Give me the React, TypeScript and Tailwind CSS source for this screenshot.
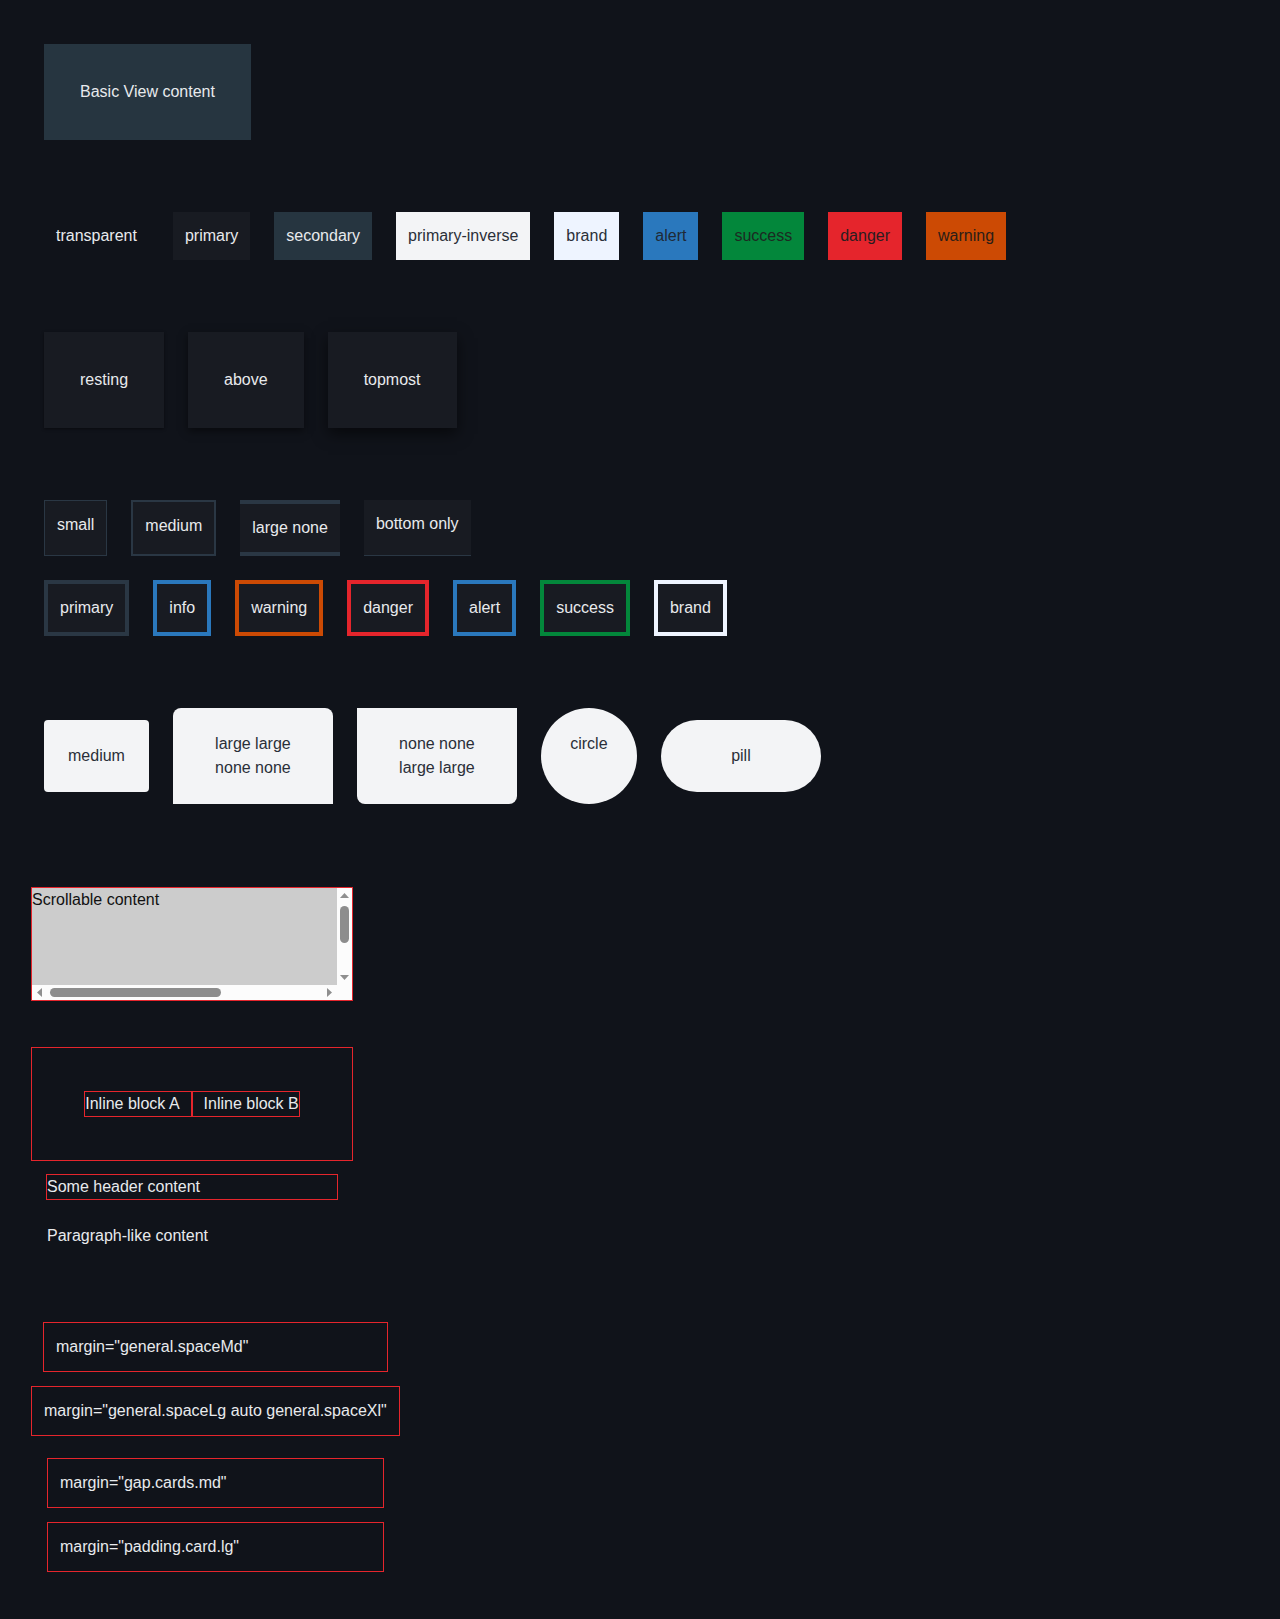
import React from "react";

const bgSwatches = [
  { label: "transparent", cls: "bg-transparent text-[#e8eaed]" },
  { label: "primary", cls: "bg-[#181b22] text-[#e8eaed]" },
  { label: "secondary", cls: "bg-[#263540] text-[#e8eaed]" },
  { label: "primary-inverse", cls: "bg-[#f3f4f6] text-[#2a2f38]" },
  { label: "brand", cls: "bg-[#eef4ff] text-[#2a2f38]" },
  { label: "alert", cls: "bg-[#2a78bd] text-[#1f2a36]" },
  { label: "success", cls: "bg-[#03873b] text-[#1c2a22]" },
  { label: "danger", cls: "bg-[#e5252c] text-[#2a1d20]" },
  { label: "warning", cls: "bg-[#cc4a04] text-[#2a1e18]" },
];

const elevations = [
  { label: "resting", cls: "shadow-[0_1px_3px_rgba(0,0,0,0.45)]" },
  { label: "above", cls: "shadow-[0_3px_8px_rgba(0,0,0,0.5)]" },
  { label: "topmost", cls: "shadow-[0_6px_14px_rgba(0,0,0,0.55)]" },
];

const borderColors = [
  { label: "primary", cls: "border-[#2a3744]" },
  { label: "info", cls: "border-[#2a78bd]" },
  { label: "warning", cls: "border-[#cc4a04]" },
  { label: "danger", cls: "border-[#e5252c]" },
  { label: "alert", cls: "border-[#2a78bd]" },
  { label: "success", cls: "border-[#03873b]" },
  { label: "brand", cls: "border-[#eef4ff]" },
];

// little triangle used on the scrollbar buttons
const Arrow = ({ dir }: { dir: "up" | "down" | "left" | "right" }) => {
  const pts = {
    up: "0,5 4.5,0 9,5",
    down: "0,0 9,0 4.5,5",
    left: "5,0 5,9 0,4.5",
    right: "0,0 5,4.5 0,9",
  }[dir];
  const vertical = dir === "up" || dir === "down";
  return (
    <div className="flex h-[15px] w-[15px] shrink-0 items-center justify-center">
      <svg width={vertical ? 9 : 5} height={vertical ? 5 : 9}>
        <polygon points={pts} fill="#8f8f8f" />
      </svg>
    </div>
  );
};

const App = () => {
  return (
    <div className="min-h-screen bg-[#10131a] font-['Liberation_Sans',Arial,sans-serif] text-base leading-6 text-[#e8eaed] flex flex-col items-start pb-12">
      {/* basic view */}
      <div className="ml-[44px] mt-[44px] bg-[#263540] p-9">Basic View content</div>

      {/* backgrounds */}
      <div className="ml-[44px] mt-[72px] flex gap-6">
        {bgSwatches.map((s) => (
          <div key={s.label} className={`p-3 ${s.cls}`}>
            {s.label}
          </div>
        ))}
      </div>

      {/* elevation */}
      <div className="ml-[44px] mt-[72px] flex gap-6">
        {elevations.map((e) => (
          <div key={e.label} className={`bg-[#181b22] p-9 ${e.cls}`}>
            {e.label}
          </div>
        ))}
      </div>

      {/* border widths */}
      <div className="ml-[44px] mt-[72px] flex items-stretch gap-6">
        <div className="border border-[#2a3744] bg-[#181b22] px-3 pt-3">small</div>
        <div className="border-2 border-[#2a3744] bg-[#181b22] px-3 pt-3">medium</div>
        <div className="border-y-4 border-[#2a3744] bg-[#181b22] p-3">large none</div>
        <div className="border-b border-[#2a3744] bg-[#181b22] px-3 pt-3">bottom only</div>
      </div>

      {/* border colours */}
      <div className="ml-[44px] mt-6 flex gap-6">
        {borderColors.map((b) => (
          <div key={b.label} className={`border-4 bg-[#181b22] p-3 ${b.cls}`}>
            {b.label}
          </div>
        ))}
      </div>

      {/* radius */}
      <div className="ml-[44px] mt-[72px] flex items-center gap-6 text-[#2a2f38]">
        <div className="rounded bg-[#f3f4f6] p-6">medium</div>
        <div className="w-[160px] rounded-t-lg bg-[#f3f4f6] p-6 text-center">
          large large
          <br />
          none none
        </div>
        <div className="w-[160px] rounded-b-lg bg-[#f3f4f6] p-6 text-center">
          none none
          <br />
          large large
        </div>
        <div className="h-24 w-24 rounded-full bg-[#f3f4f6] pt-6 text-center">circle</div>
        <div className="w-[160px] rounded-full bg-[#f3f4f6] p-6 text-center">pill</div>
      </div>

      {/* scroll container with classic scrollbars */}
      <div className="ml-[31px] mt-[83px] flex h-[114px] w-[322px] flex-col border border-[#e5252c] bg-[#fcfcfc]">
        <div className="flex h-[97px]">
          <div className="w-[305px] overflow-hidden bg-[#cccccc] text-[#111111]">Scrollable content</div>
          <div className="flex w-[15px] flex-col items-center">
            <Arrow dir="up" />
            <div className="mt-[3px] h-[37px] w-[9px] rounded-full bg-[#8d8d8d]" />
            <div className="flex-1" />
            <Arrow dir="down" />
          </div>
        </div>
        <div className="flex h-[15px] items-center">
          <Arrow dir="left" />
          <div className="ml-[3px] h-[9px] w-[171px] rounded-full bg-[#8d8d8d]" />
          <div className="flex-1" />
          <Arrow dir="right" />
          <div className="h-[15px] w-[15px]" />
        </div>
      </div>

      {/* inline blocks */}
      <div className="ml-[31px] mt-[46px] flex h-[114px] w-[322px] items-center justify-center border border-[#e5252c]">
        <div className="border border-[#e5252c] pr-[11px]">Inline block A</div>
        <div className="border border-[#e5252c] pl-[11px]">Inline block B</div>
      </div>

      <div className="ml-[46px] mt-[13px] w-[292px] border border-[#e5252c]">Some header content</div>

      <p className="ml-[47px] mt-[24px]">Paragraph-like content</p>

      {/* margin variants */}
      <div className="ml-[31px] mt-[74px] flex w-[369px] flex-col">
        <div className="mx-3 border border-[#e5252c] p-3">margin="general.spaceMd"</div>
        <div className="mt-[14px] whitespace-nowrap border border-[#e5252c] p-3">
          margin="general.spaceLg auto general.spaceXl"
        </div>
        <div className="mx-4 mt-[22px] border border-[#e5252c] p-3">margin="gap.cards.md"</div>
        <div className="mx-4 mt-[14px] border border-[#e5252c] p-3">margin="padding.card.lg"</div>
      </div>
    </div>
  );
};

export default App;
